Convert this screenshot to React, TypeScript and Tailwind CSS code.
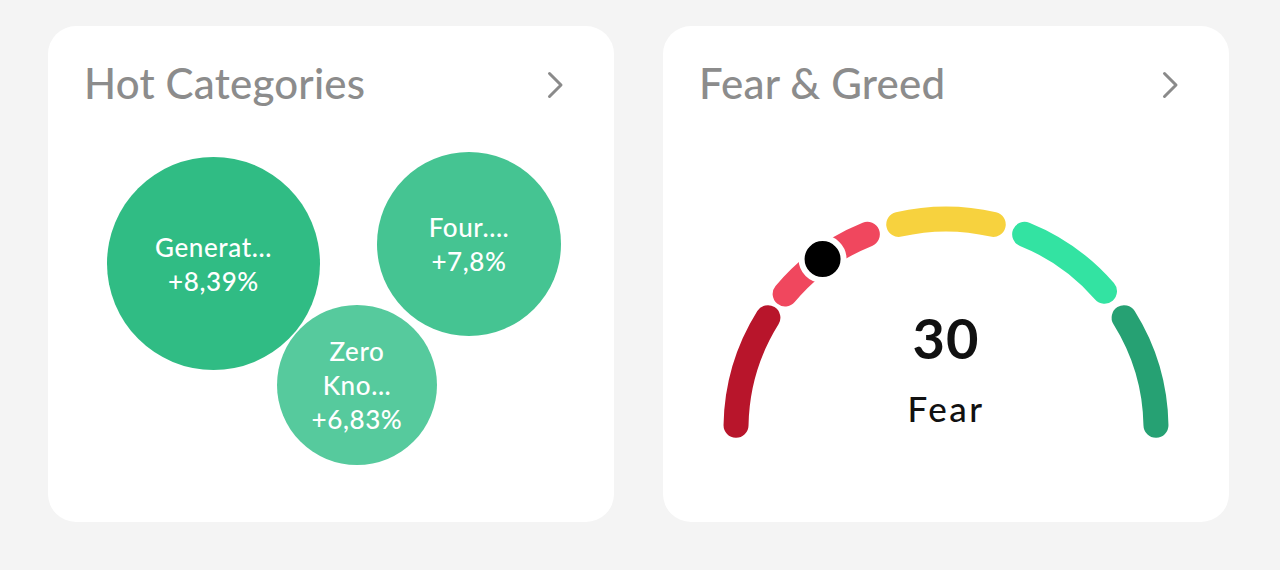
import React from "react";

const Chevron = () => (
  <svg width="18" height="28" viewBox="0 0 18 28" fill="none">
    <path d="M3.5 2.5 L15 14 L3.5 25.5" stroke="#8a8a8a" strokeWidth="3" strokeLinecap="round" strokeLinejoin="round" />
  </svg>
);

const Header = ({ title }: { title: string }) => (
  <div className="flex items-center justify-between pl-[36px] pr-[50px] pt-[36px]">
    <div className="text-[42px] font-medium leading-none tracking-[0.2px] text-[#8c8c8c]">
      {title}
    </div>
    <div className="mt-[4px]">
      <Chevron />
    </div>
  </div>
);

type Bubble = { label: string[]; left: number; top: number; size: number; color: string };

const bubbles: Bubble[] = [
  { label: ["Generat...", "+8,39%"], left: 59, top: 131, size: 213, color: "#30bc84" },
  { label: ["Four....", "+7,8%"], left: 329, top: 126, size: 184, color: "#45c492" },
  { label: ["Zero", "Kno...", "+6,83%"], left: 229, top: 279, size: 160, color: "#56ca9d" },
];

const cx = 283;
const cy = 403;
const R = 210;
const pt = (deg: number) => {
  const r = (deg * Math.PI) / 180;
  return [cx - R * Math.cos(r), cy - R * Math.sin(r)];
};
const arc = (a: number, b: number) => {
  const [x1, y1] = pt(a);
  const [x2, y2] = pt(b);
  return `M ${x1} ${y1} A ${R} ${R} 0 0 1 ${x2} ${y2}`;
};

const segments: [number, number, string][] = [
  [1, 32, "#b8152b"],
  [40, 68, "#f0475e"],
  [77, 103, "#f7d23e"],
  [112, 139, "#33e3a2"],
  [148, 179, "#26a173"],
];

export default function App() {
  const [dx, dy] = pt(54);
  return (
    <div className="min-h-[570px] w-[1280px] bg-[#f4f4f4] pl-[48px] pt-[26px]" style={{ fontFamily: "Lato, 'Noto Sans', sans-serif" }}>
      <div className="flex gap-[49px]">
        <div className="h-[496px] w-[566px] rounded-[28px] bg-white">
          <Header title="Hot Categories" />
          <div className="relative h-[380px]">
            {bubbles.map((b, i) => (
              <div
                key={i}
                className="absolute flex flex-col items-center justify-center rounded-full text-center text-[26px] font-medium leading-[34px] tracking-[0.6px] text-white"
                style={{ left: b.left, top: b.top - 78, width: b.size, height: b.size, backgroundColor: b.color }}
              >
                {b.label.map((l, j) => (
                  <div key={j}>{l}</div>
                ))}
              </div>
            ))}
          </div>
        </div>
        <div className="h-[496px] w-[566px] rounded-[28px] bg-white">
          <Header title="Fear & Greed" />
          <div className="relative h-[380px]">
            <svg width="566" height="380" viewBox="0 78 566 380" className="block">
              {segments.map(([a, b, c], i) => (
                <path key={i} d={arc(a, b)} stroke={c} strokeWidth="25" strokeLinecap="round" fill="none" />
              ))}
              <circle cx={dx} cy={dy} r="21" fill="#000" stroke="#fff" strokeWidth="6" />
            </svg>
            <div className="absolute left-0 right-0 top-[206px] text-center text-[56px] font-bold leading-none tracking-[1px] text-[#111]">30</div>
            <div className="absolute left-0 right-0 top-[287px] text-center text-[35px] font-medium leading-none tracking-[2.5px] text-[#111]">Fear</div>
          </div>
        </div>
      </div>
    </div>
  );
}
